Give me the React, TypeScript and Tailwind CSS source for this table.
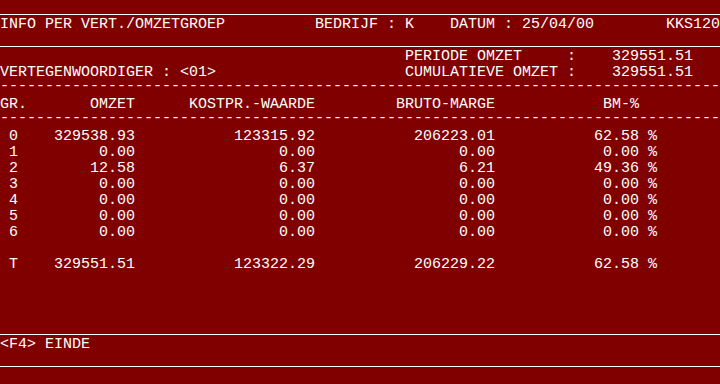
const rule = "-".repeat(80);

// place text fragments on an 80-column terminal line
const at = (parts: [number, string][]) => {
  let s = "";
  for (const [col, text] of parts) {
    s = s.padEnd(col, " ") + text;
  }
  return s;
};

const right = (text: string, endCol: number) => [endCol - text.length + 1, text] as [number, string];

const ROWS = [
  { gr: "0", omzet: "329538.93", kost: "123315.92", bruto: "206223.01", bm: "62.58" },
  { gr: "1", omzet: "0.00", kost: "0.00", bruto: "0.00", bm: "0.00" },
  { gr: "2", omzet: "12.58", kost: "6.37", bruto: "6.21", bm: "49.36" },
  { gr: "3", omzet: "0.00", kost: "0.00", bruto: "0.00", bm: "0.00" },
  { gr: "4", omzet: "0.00", kost: "0.00", bruto: "0.00", bm: "0.00" },
  { gr: "5", omzet: "0.00", kost: "0.00", bruto: "0.00", bm: "0.00" },
  { gr: "6", omzet: "0.00", kost: "0.00", bruto: "0.00", bm: "0.00" },
];

const TOTAL = { gr: "T", omzet: "329551.51", kost: "123322.29", bruto: "206229.22", bm: "62.58" };

type Row = typeof TOTAL;

const dataLine = (r: Row) =>
  at([
    [1, r.gr],
    right(r.omzet, 14),
    right(r.kost, 34),
    right(r.bruto, 54),
    right(r.bm, 70),
    [72, "%"],
  ]);

function Text({ children }: { children?: string }) {
  return <div className="h-4 whitespace-pre leading-[18px]">{children}</div>;
}

function Dashes() {
  return <div className="h-4 overflow-hidden whitespace-pre leading-[14px]">{rule}</div>;
}

function Line() {
  return (
    <div className="flex h-4 flex-col justify-end pb-px">
      <div className="h-px w-full bg-white" />
    </div>
  );
}

export default function App() {
  return (
    <div
      className="h-[384px] w-[720px] overflow-hidden bg-[#800000] text-[15px] text-white"
      style={{ fontFamily: '"Liberation Mono", "DejaVu Sans Mono", monospace' }}
    >
      <Line />
      <Text>
        {at([
          [0, "INFO PER VERT./OMZETGROEP"],
          [35, "BEDRIJF : K"],
          [50, "DATUM : 25/04/00"],
          [74, "KKS120"],
        ])}
      </Text>
      <Line />
      <Text>{at([[45, "PERIODE OMZET"], [63, ":"], [68, "329551.51"]])}</Text>
      <Text>
        {at([
          [0, "VERTEGENWOORDIGER : <01>"],
          [45, "CUMULATIEVE OMZET :"],
          [68, "329551.51"],
        ])}
      </Text>
      <Dashes />
      <Text>
        {at([
          [0, "GR."],
          [10, "OMZET"],
          [21, "KOSTPR.-WAARDE"],
          [44, "BRUTO-MARGE"],
          [67, "BM-%"],
        ])}
      </Text>
      <Dashes />
      {ROWS.map((r) => (
        <Text key={r.gr}>{dataLine(r)}</Text>
      ))}
      <Text />
      <Text>{dataLine(TOTAL)}</Text>
      <Text />
      <Text />
      <Text />
      <Line />
      <Text>{"<F4> EINDE"}</Text>
      <Line />
      <Text />
    </div>
  );
}
